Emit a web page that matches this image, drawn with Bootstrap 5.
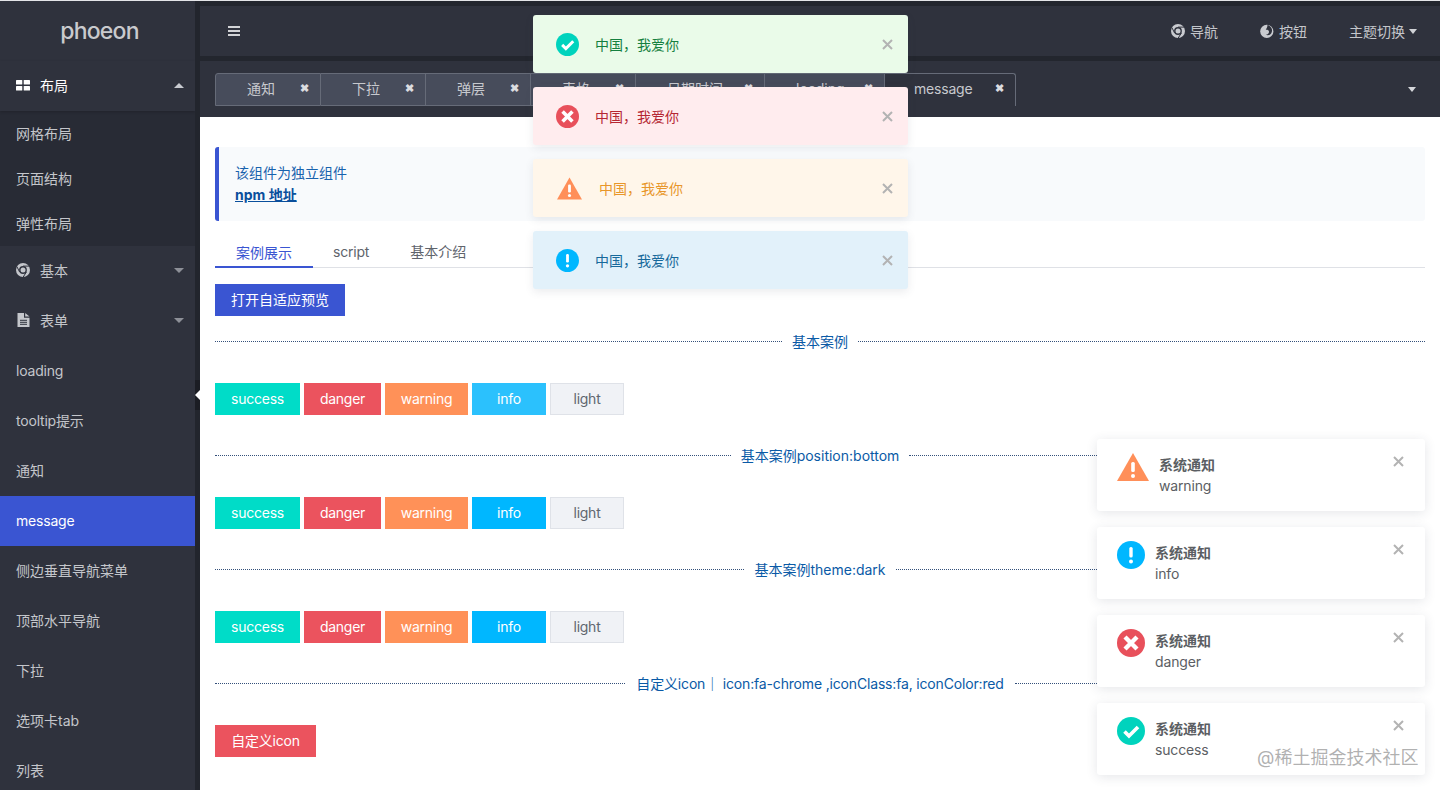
<!DOCTYPE html>
<html lang="zh-CN">
<head>
<meta charset="utf-8">
<title>phoeon message</title>
<link href="https://cdn.jsdelivr.net/npm/bootstrap@5.3.0/dist/css/bootstrap.min.css" rel="stylesheet">
<style>
html,body{height:790px;overflow:hidden}
body{font-family:Inter,"Noto Sans CJK SC",sans-serif;font-size:14px;background:#fff;color:#5a5e66;position:relative;border-top:1px solid #e4e5e8}
.app-shell{height:789px}
.side-col{width:195px;background:#2f323d;color:#c4c6cb;flex:none;height:789px;overflow:hidden}
.side-strip{width:5px;background:#22252d;flex:none;position:relative}
.side-flap{position:absolute;left:0;top:379px;width:5px;height:30px;background:#1b1d24}
.side-flap::after{content:"";position:absolute;left:0;top:10px;border:5px solid transparent;border-left:0;border-right:5px solid #fff}
.logo-box{height:60px;font-size:23px;font-weight:500;color:#c9cacd;letter-spacing:-.8px;padding:1px 0 0 4px}
.side-row{height:50px;padding:0 11px 2px 16px;white-space:nowrap}
.side-row.is-open{color:#fff;box-shadow:0 1px 3px rgba(0,0,0,.2);position:relative}
.side-row.is-on{background:#3a55d2;color:#fff}
.lat-tx{letter-spacing:-.2px}
.sub-list{background:#282b35}
.sub-row{height:45px;padding:0 16px 0}
.row-ico{width:14px;height:14px;margin-right:10px;flex:none;fill:currentColor}
.tri-down,.tri-up{width:0;height:0;border-left:5px solid transparent;border-right:5px solid transparent}
.tri-down{border-top:5px solid #8d9098}
.tri-up{border-bottom:5px solid #c8cad0}
.main-col{min-width:0;background:#fff}
.top-cap{height:5px;background:#23262e}
.head-bar{height:50px;background:#2f323d;color:#c4c6cb;padding:0 23px 0 28px}
.head-gap{height:5px;background:#23262e}
.burger{width:12px;height:10px;border-top:2px solid #d3d4d7;border-bottom:2px solid #d3d4d7;position:relative}
.burger::after{content:"";position:absolute;left:0;right:0;top:2px;height:2px;background:#d3d4d7}
.head-ico{width:14px;height:14px;fill:#c9cbd0;margin-right:5px}
.head-link{margin-left:42px}
.tab-bar{height:56px;background:#2f323d;padding:12px 24px 11px 15px}
.view-tab{height:33px;background:#474c5b;border:1px solid #666b78;border-left:0;color:#c7c9ce;padding:0 11px 2px 31px;white-space:nowrap;justify-content:space-between}
.view-tab:first-child{border-left:1px solid #666b78;border-radius:3px 0 0 0}
.view-tab:nth-child(1){width:106px}.view-tab:nth-child(2){width:105px}.view-tab:nth-child(3){width:105px}
.view-tab:nth-child(4){width:105px}.view-tab:nth-child(5){width:129px}.view-tab:nth-child(6){width:120px}
.view-tab:nth-child(7){width:131px;background:#2f323d;border-bottom:0;padding:0 11px 3px 29px;border-radius:0 3px 0 0;letter-spacing:-.2px}
.tab-x{font-size:11px;font-weight:700;color:#dcdde0;line-height:1}
.page-body{padding:30px 15px 0}
.note-box{height:74px;background:#f8fafc;border-left:4px solid #3a55d2;border-radius:3px;padding:15px 16px;color:#1862ad;line-height:22px}
.note-box a{color:#0a4f9c;font-weight:700}
.sub-tabs{height:47px;border-bottom:1px solid #dfe1e6;margin-bottom:16px;align-items:flex-end}
.sub-tab{height:36px;line-height:20px;padding:11px 20px 0;color:#60646c}
.sub-tab.is-on{color:#3a55d2;border-bottom:2px solid #3a55d2;margin-bottom:-1px;padding:11px 21px 0}
.sub-tab.is-wide{margin-left:1px}
.flat-btn{height:32px;border:0;border-radius:0;color:#fff;font-size:14px;padding:0 16px;line-height:32px}
.bt-primary{background:#3a55d2}
.bt-success{background:#00dcc8;width:85px}
.bt-danger{background:#eb535e;width:77px}
.bt-warning{background:#ff9158;width:83px}
.bt-info{background:#00b7ff;width:74px}
.bt-info.is-lit{background:#2bc1fd}
.bt-light{background:#f0f2f6;border:1px solid #dfe2e8;color:#60666f;width:74px;line-height:30px}
.bt-custom{background:#eb535e;width:101px;padding:0}
.bt-success,.bt-danger,.bt-warning,.bt-info,.bt-light,.bt-custom{letter-spacing:-.25px;padding:0}
.rule-row{height:24px;color:#0a5aa6;margin:28px 0 30px}
.rule-row.is-first{margin-top:13px}
.rule-line{flex:1;border-top:1px dotted #34507a}
.rule-text{padding:0 10px;white-space:pre}
.rule-text.is-tight{letter-spacing:-.17px;padding:0 11px}
.msg-stack{position:absolute;left:533px;top:14px;width:375px;z-index:5}
.msg-item{height:58px;border-radius:3px;padding:0 15px 0 23px;box-shadow:0 3px 8px rgba(60,70,90,.1)}
.msg-ok{background:#eafbe9;color:#15803f}
.msg-bad{background:#ffecee;color:#b52733}
.msg-warn{background:#fff6ea;color:#e8962a}
.msg-info{background:#e2f1fa;color:#17699b}
.msg-ico{width:23px;height:23px;margin-right:16px;flex:none}
.msg-warn .msg-ico{width:25px;margin:0 17px 0 1px}
.x-mark{width:11px;height:11px;stroke:#b3b3b3;stroke-width:2;flex:none}
.note-stack{position:absolute;left:1097px;top:438px;width:328px;z-index:5}
.ntf-item{height:72px;background:#fff;border-radius:3px;box-shadow:0 2px 12px rgba(40,50,70,.12);padding:14px 21px 0 20px;color:#5b5e63}
.ntf-ico{width:28px;height:28px;margin-right:10px;flex:none}
.ntf-warn .ntf-ico{width:32px;height:28px}
.ntf-title{font-weight:700;line-height:21px;margin-top:1px}
.ntf-text{line-height:21px;letter-spacing:-.15px}
.ntf-item .x-mark{margin-top:3px}
.water-mark{position:absolute;left:1257px;top:745px;font-size:18px;line-height:24px;color:rgba(110,110,110,.55);z-index:6;white-space:nowrap}
</style>
</head>
<body>
<div class="app-shell d-flex">
  <aside class="side-col">
    <div class="logo-box d-flex align-items-center justify-content-center">phoeon</div>
    <div class="side-row is-open d-flex align-items-center">
      <svg class="row-ico" viewBox="0 0 14 14"><rect x="0" y="2" width="6.3" height="4.6" rx=".6"/><rect x="7.7" y="2" width="6.3" height="4.6" rx=".6"/><rect x="0" y="7.9" width="6.3" height="4.6" rx=".6"/><rect x="7.7" y="7.9" width="6.3" height="4.6" rx=".6"/></svg>
      <span>布局</span><span class="tri-up ms-auto"></span>
    </div>
    <div class="sub-list">
      <div class="sub-row d-flex align-items-center">网格布局</div>
      <div class="sub-row d-flex align-items-center">页面结构</div>
      <div class="sub-row d-flex align-items-center">弹性布局</div>
    </div>
    <div class="side-row d-flex align-items-center">
      <svg class="row-ico" viewBox="0 0 14 14"><circle cx="7" cy="7" r="7"/><circle cx="7" cy="7" r="3.9" fill="#2f323d"/><circle cx="7" cy="7" r="2.5"/><path d="M7 3.1h6.4M3.6 9 .9 3.6M10.4 9 7.2 14" stroke="#2f323d" stroke-width="1"/></svg>
      <span>基本</span><span class="tri-down ms-auto"></span>
    </div>
    <div class="side-row d-flex align-items-center">
      <svg class="row-ico" viewBox="0 0 14 14"><path d="M1.5 0H8v4.8h5.5V14H1.5z"/><path d="M9.2 0l4.3 3.6H9.2z"/><path d="M4 7.3h7M4 9.3h7M4 11.3h7" stroke="#2f323d" stroke-width="1"/></svg>
      <span>表单</span><span class="tri-down ms-auto"></span>
    </div>
    <div class="side-row lat-tx d-flex align-items-center">loading</div>
    <div class="side-row lat-tx d-flex align-items-center">tooltip提示</div>
    <div class="side-row d-flex align-items-center">通知</div>
    <div class="side-row is-on lat-tx d-flex align-items-center">message</div>
    <div class="side-row d-flex align-items-center">侧边垂直导航菜单</div>
    <div class="side-row d-flex align-items-center">顶部水平导航</div>
    <div class="side-row d-flex align-items-center">下拉</div>
    <div class="side-row d-flex align-items-center">选项卡tab</div>
    <div class="side-row d-flex align-items-center">列表</div>
  </aside>
  <div class="side-strip"><div class="side-flap"></div></div>
  <main class="main-col flex-grow-1">
    <div class="top-cap"></div>
    <header class="head-bar d-flex align-items-center">
      <span class="burger"></span>
      <div class="ms-auto d-flex align-items-center">
        <span class="d-flex align-items-center"><svg class="head-ico" viewBox="0 0 14 14"><circle cx="7" cy="7" r="7"/><circle cx="7" cy="7" r="3.9" fill="#2f323d"/><circle cx="7" cy="7" r="2.5"/><path d="M7 3.1h6.4M3.6 9 .9 3.6M10.4 9 7.2 14" stroke="#2f323d" stroke-width="1"/></svg>导航</span>
        <span class="head-link d-flex align-items-center"><svg class="head-ico" viewBox="0 0 14 14"><circle cx="6.8" cy="7.4" r="6.6"/><path d="M7.5 .8C11.8 2.6 13 6.4 11.3 9.2 10.2 11 7.7 11.8 5.8 10.5 7.9 10.6 9.3 9.1 8.9 7.3 8.5 6 7.2 5.5 5.8 5.9 6.4 4.6 7.6 3.3 7.5.8z" fill="#2f323d"/></svg>按钮</span>
        <span class="head-link d-flex align-items-center">主题切换<span class="tri-down ms-1" style="border-top-color:#d0d2d6;border-left-width:4px;border-right-width:4px"></span></span>
      </div>
    </header>
    <div class="head-gap"></div>
    <nav class="tab-bar d-flex align-items-stretch">
      <div class="d-flex flex-grow-1">
        <div class="view-tab d-flex align-items-center"><span>通知</span><span class="tab-x">✖</span></div>
        <div class="view-tab d-flex align-items-center"><span>下拉</span><span class="tab-x">✖</span></div>
        <div class="view-tab d-flex align-items-center"><span>弹层</span><span class="tab-x">✖</span></div>
        <div class="view-tab d-flex align-items-center"><span>表格</span><span class="tab-x">✖</span></div>
        <div class="view-tab d-flex align-items-center"><span>日期时间</span><span class="tab-x">✖</span></div>
        <div class="view-tab d-flex align-items-center"><span>loading</span><span class="tab-x">✖</span></div>
        <div class="view-tab d-flex align-items-center"><span>message</span><span class="tab-x">✖</span></div>
      </div>
      <span class="tri-down align-self-center" style="border-top-color:#d5d7db;border-left-width:4px;border-right-width:4px"></span>
    </nav>
    <section class="page-body">
      <div class="note-box">该组件为独立组件<br><a href="#">npm 地址</a></div>
      <div class="sub-tabs d-flex">
        <div class="sub-tab is-on">案例展示</div>
        <div class="sub-tab lat-tx">script</div>
        <div class="sub-tab is-wide">基本介绍</div>
      </div>
      <button class="btn flat-btn bt-primary d-block">打开自适应预览</button>
      <div class="rule-row is-first d-flex align-items-center"><span class="rule-line"></span><span class="rule-text">基本案例</span><span class="rule-line"></span></div>
      <div class="d-flex gap-1">
        <button class="btn flat-btn bt-success">success</button><button class="btn flat-btn bt-danger">danger</button><button class="btn flat-btn bt-warning">warning</button><button class="btn flat-btn bt-info is-lit">info</button><button class="btn flat-btn bt-light">light</button>
      </div>
      <div class="rule-row d-flex align-items-center"><span class="rule-line"></span><span class="rule-text">基本案例position:bottom</span><span class="rule-line"></span></div>
      <div class="d-flex gap-1">
        <button class="btn flat-btn bt-success">success</button><button class="btn flat-btn bt-danger">danger</button><button class="btn flat-btn bt-warning">warning</button><button class="btn flat-btn bt-info">info</button><button class="btn flat-btn bt-light">light</button>
      </div>
      <div class="rule-row d-flex align-items-center"><span class="rule-line"></span><span class="rule-text">基本案例theme:dark</span><span class="rule-line"></span></div>
      <div class="d-flex gap-1">
        <button class="btn flat-btn bt-success">success</button><button class="btn flat-btn bt-danger">danger</button><button class="btn flat-btn bt-warning">warning</button><button class="btn flat-btn bt-info">info</button><button class="btn flat-btn bt-light">light</button>
      </div>
      <div class="rule-row d-flex align-items-center"><span class="rule-line"></span><span class="rule-text is-tight">自定义icon｜ icon:fa-chrome ,iconClass:fa, iconColor:red</span><span class="rule-line"></span></div>
      <button class="btn flat-btn bt-custom d-block">自定义icon</button>
    </section>
  </main>
</div>

<div class="msg-stack d-flex flex-column" style="gap:14px">
  <div class="msg-item msg-ok d-flex align-items-center">
    <svg class="msg-ico" viewBox="0 0 28 28"><circle cx="14" cy="14" r="14" fill="#00d3bd"/><path d="M7.5 14.5l4.5 4.5 9-9" fill="none" stroke="#fff" stroke-width="3.6"/></svg>
    <span>中国，我爱你</span><svg class="x-mark ms-auto" viewBox="0 0 11 11"><path d="M1 1l9 9M10 1l-9 9"/></svg>
  </div>
  <div class="msg-item msg-bad d-flex align-items-center">
    <svg class="msg-ico" viewBox="0 0 28 28"><circle cx="14" cy="14" r="14" fill="#e8505b"/><path d="M8 8l12 12M20 8L8 20" fill="none" stroke="#fff" stroke-width="4.4"/></svg>
    <span>中国，我爱你</span><svg class="x-mark ms-auto" viewBox="0 0 11 11"><path d="M1 1l9 9M10 1l-9 9"/></svg>
  </div>
  <div class="msg-item msg-warn d-flex align-items-center">
    <svg class="msg-ico" viewBox="0 0 32 28"><path d="M16 0l16 28H0z" fill="#ff8f59"/><rect x="14.2" y="9" width="3.6" height="10" rx="1.5" fill="#fff"/><circle cx="16" cy="23" r="2" fill="#fff"/></svg>
    <span>中国，我爱你</span><svg class="x-mark ms-auto" viewBox="0 0 11 11"><path d="M1 1l9 9M10 1l-9 9"/></svg>
  </div>
  <div class="msg-item msg-info d-flex align-items-center">
    <svg class="msg-ico" viewBox="0 0 28 28"><circle cx="14" cy="14" r="14" fill="#00b7ff"/><rect x="12.3" y="6" width="3.4" height="10.5" rx="1.5" fill="#fff"/><circle cx="14" cy="20.5" r="2" fill="#fff"/></svg>
    <span>中国，我爱你</span><svg class="x-mark ms-auto" viewBox="0 0 11 11"><path d="M1 1l9 9M10 1l-9 9"/></svg>
  </div>
</div>

<div class="note-stack d-flex flex-column" style="gap:16px">
  <div class="ntf-item ntf-warn d-flex">
    <svg class="ntf-ico" viewBox="0 0 32 28"><path d="M16 0l16 28H0z" fill="#ff8f59"/><rect x="14.2" y="9" width="3.6" height="10" rx="1.5" fill="#fff"/><circle cx="16" cy="23" r="2" fill="#fff"/></svg>
    <div><div class="ntf-title">系统通知</div><div class="ntf-text">warning</div></div>
    <svg class="x-mark ms-auto" viewBox="0 0 11 11"><path d="M1 1l9 9M10 1l-9 9"/></svg>
  </div>
  <div class="ntf-item d-flex">
    <svg class="ntf-ico" viewBox="0 0 28 28"><circle cx="14" cy="14" r="14" fill="#00b7ff"/><rect x="12.3" y="6" width="3.4" height="10.5" rx="1.5" fill="#fff"/><circle cx="14" cy="20.5" r="2" fill="#fff"/></svg>
    <div><div class="ntf-title">系统通知</div><div class="ntf-text">info</div></div>
    <svg class="x-mark ms-auto" viewBox="0 0 11 11"><path d="M1 1l9 9M10 1l-9 9"/></svg>
  </div>
  <div class="ntf-item d-flex">
    <svg class="ntf-ico" viewBox="0 0 28 28"><circle cx="14" cy="14" r="14" fill="#e8505b"/><path d="M8 8l12 12M20 8L8 20" fill="none" stroke="#fff" stroke-width="4.4"/></svg>
    <div><div class="ntf-title">系统通知</div><div class="ntf-text">danger</div></div>
    <svg class="x-mark ms-auto" viewBox="0 0 11 11"><path d="M1 1l9 9M10 1l-9 9"/></svg>
  </div>
  <div class="ntf-item d-flex">
    <svg class="ntf-ico" viewBox="0 0 28 28"><circle cx="14" cy="14" r="14" fill="#00d3bd"/><path d="M7.5 14.5l4.5 4.5 9-9" fill="none" stroke="#fff" stroke-width="3.6"/></svg>
    <div><div class="ntf-title">系统通知</div><div class="ntf-text">success</div></div>
    <svg class="x-mark ms-auto" viewBox="0 0 11 11"><path d="M1 1l9 9M10 1l-9 9"/></svg>
  </div>
</div>
<div class="water-mark">@稀土掘金技术社区</div>
<script src="https://cdn.jsdelivr.net/npm/bootstrap@5.3.0/dist/js/bootstrap.bundle.min.js"></script>
</body>
</html>
